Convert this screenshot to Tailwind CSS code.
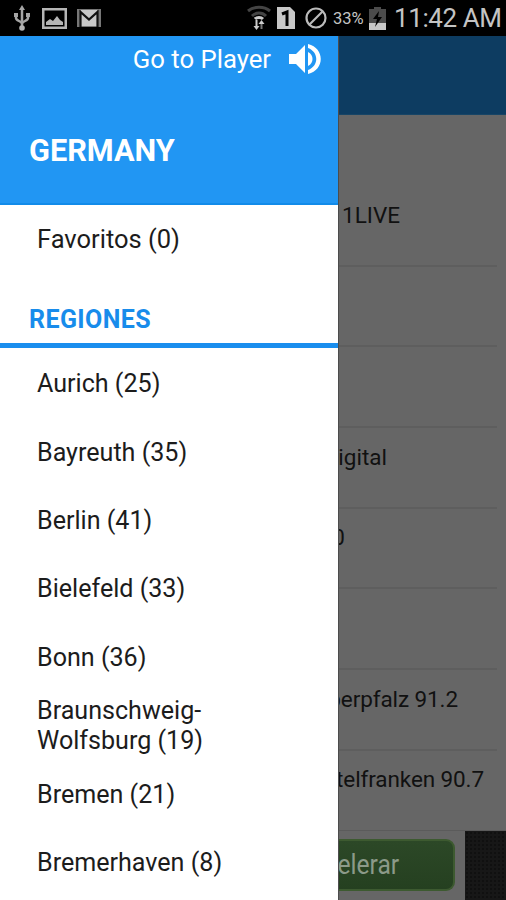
<!DOCTYPE html>
<html lang="es">

<head>
    <meta charset="UTF-8">
    <meta name="viewport" content="width=device-width, initial-scale=1.0">
    <title>Radio Germany</title>
    <script src="https://cdn.jsdelivr.net/npm/@tailwindcss/browser@4"></script>
</head>

<body class="bg-black font-['Roboto',sans-serif]">
    <div class="w-[506px] h-[900px] flex flex-col overflow-hidden">
        <!-- Status bar -->
        <header class="h-9 shrink-0 bg-black flex items-center justify-between pl-[14px] pr-1 text-[#c4c4c4]">
            <div class="flex items-center">
                <svg class="w-4 h-[26px]" viewBox="0 0 16 26" fill="none" stroke="#a5a5a5" stroke-width="2.500">
                    <path d="M8 3v20M2 9v4c0 3 6 3 6 6M14 9v4c0 3-6 3-6 6" />
                    <path d="M8 0l3 5H5zM0 8h4v4H0zM12 8h4v4h-4z" fill="#a5a5a5" stroke="none" />
                    <circle cx="8" cy="23" r="2.8" fill="#b5b5b5" stroke="none" />
                </svg>
                <svg class="w-[25px] h-[21px] ml-3" viewBox="0 0 25 21">
                    <path d="M1.25 1.25h22.5v18.5H1.25z" fill="none" stroke="#b5b5b5" stroke-width="2.5" />
                    <path d="M4 17v-3l4-3 3 2 4-5 3 4 3 2v3z" fill="#b5b5b5" />
                </svg>
                <svg class="w-6 h-[18px] ml-[10px]" viewBox="0 0 24 18">
                    <path d="M0 0h24v18H0z" fill="#777" />
                    <path d="M4 1h16v16H4z" fill="#c8c8c8" />
                    <path d="M3.5 18V3l8.500 7.500L20.500 3v15" fill="none" stroke="#111" stroke-width="2.200" />
                </svg>
            </div>
            <div class="flex items-center">
                <svg class="w-6 h-[26px]" viewBox="0 0 24 26" fill="none" stroke="#444" stroke-width="3">
                    <path d="M1 6c6-5 16-5 22 0M5 11c4-4 10-4 14 0" />
                    <path d="M8 14c2-2 6-2 8 0" stroke="#ccc" />
                    <path d="M9.500 15v7" stroke="#ccc" stroke-width="2" />
                    <path d="M6.500 21h6l-3 4z" fill="#ccc" stroke="none" />
                    <path d="M14.500 17v7" stroke="#777" stroke-width="2" />
                    <path d="M11.500 19h6l-3-4z" fill="#ccc" stroke="none" />
                </svg>
                <svg class="w-[18px] h-[22px] ml-[6px]" viewBox="0 0 18 22">
                    <path d="M0 0h13l5 5v17H0z" fill="#c8c8c8" />
                    <path d="M5 7l5-2v14" fill="none" stroke="#000" stroke-width="3" />
                </svg>
                <svg class="w-[22px] h-[22px] ml-[10px]" viewBox="0 0 22 22" fill="none" stroke="#bbb" stroke-width="2.200">
                    <circle cx="11" cy="11" r="9.500" />
                    <path d="M4.500 17.500l13-13" />
                </svg>
                <span class="ml-[6px] w-[31px] text-[16.500px] leading-none whitespace-nowrap relative top-px">33%</span>
                <svg class="w-[17px] h-[23px] ml-[5px]" viewBox="0 0 17 23">
                    <path d="M5 0h7v2h5v14H0V2h5z" fill="#4b4b4b" />
                    <path d="M0 16h17v7H0z" fill="#c8c8c8" />
                    <path d="M10 4L4 12h4l-2 8 7-10H9z" fill="#000" />
                </svg>
                <span class="ml-2 w-[108px] text-[26px] tracking-[-0.400px] leading-[30px] whitespace-nowrap">11:42 AM</span>
            </div>
        </header>

        <div class="flex-1 min-h-0 flex">
            <!-- Drawer -->
            <aside class="w-[338px] shrink-0 bg-white text-[#1c1c1c] text-[25.100px]">
                <div class="h-[169px] bg-[#2196f3] border-b-2 border-[#128be9] text-white">
                    <div class="h-[47px] flex items-center justify-end pr-[17px]">
                        <span class="text-[25.700px] whitespace-nowrap">Go to Player</span>
                        <svg class="w-8 h-[30px] ml-[18px] relative -top-px" viewBox="0 0 32 30" fill="#fff">
                            <path d="M0 10h7l9-9v28l-9-9H0z" />
                            <path d="M19 8c6 3 6 11 0 14z" />
                            <path d="M19 0c17 4 17 26 0 30v-4c11-4 11-18 0-22z" />
                        </svg>
                    </div>
                    <h1 class="mt-[46px] pl-[29px] text-[30.700px] leading-[43px] font-bold">GERMANY</h1>
                </div>
                <div class="h-[69px] pl-[37px] flex items-center text-[25.500px]">Favoritos (0)</div>
                <h2 class="h-[69px] pt-[25px] pl-[29px] text-[25px] tracking-[0.400px] leading-[41px] font-bold text-[#188ceb]">REGIONES</h2>
                <div class="h-[5px] bg-[#1a8eee]"></div>
                <ul class="pt-[2px] leading-[30px]">
                    <li class="h-[68.400px] pl-[37px] flex items-center">Aurich (25)</li>
                    <li class="h-[68.400px] pl-[37px] flex items-center">Bayreuth (35)</li>
                    <li class="h-[68.400px] pl-[37px] flex items-center">Berlin (41)</li>
                    <li class="h-[68.400px] pl-[37px] flex items-center">Bielefeld (33)</li>
                    <li class="h-[68.400px] pl-[37px] flex items-center">Bonn (36)</li>
                    <li class="h-[68.400px] pl-[37px] flex items-center">Braunschweig-<br>Wolfsburg (19)</li>
                    <li class="h-[68.400px] pl-[37px] flex items-center">Bremen (21)</li>
                    <li class="h-[68.400px] pl-[37px] flex items-center">Bremerhaven (8)</li>
                </ul>
            </aside>

            <!-- Station list, dimmed behind the drawer -->
            <main class="flex-1 min-w-0 flex flex-col bg-[#666] border-l border-[#4c4c4c] text-[#111] text-[22.500px] overflow-hidden">
                <div class="h-[79px] shrink-0 bg-[#0d3c61] border-b border-[#174566]"></div>
                <ul class="h-[715px] shrink-0 pt-[71px] pr-[9px] leading-[30px] whitespace-nowrap">
                    <li class="h-[80.700px] pt-[13.500px] border-b-2 border-[#5e5e5e]">
                        <div class="w-[61px] flex justify-end">1LIVE</div>
                    </li>
                    <li class="h-[80.700px] border-b-2 border-[#5e5e5e]"></li>
                    <li class="h-[80.700px] border-b-2 border-[#5e5e5e]"></li>
                    <li class="h-[80.700px] pt-[13.500px] border-b-2 border-[#5e5e5e]">
                        <div class="w-[48px] flex justify-end">igital</div>
                    </li>
                    <li class="h-[80.700px] pt-[13.500px] border-b-2 border-[#5e5e5e]">
                        <div class="w-[6px] flex justify-end">0</div>
                    </li>
                    <li class="h-[80.700px] border-b-2 border-[#5e5e5e]"></li>
                    <li class="h-[80.700px] pt-[13.500px] border-b-2 border-[#5e5e5e]">
                        <div class="w-[119px] flex justify-end tracking-[-0.100px]">berpfalz 91.2</div>
                    </li>
                    <li class="h-[80.700px] pt-[13.500px]">
                        <div class="w-[145px] flex justify-end tracking-[-0.100px]">telfranken 90.7</div>
                    </li>
                </ul>
                <!-- Ad banner -->
                <div class="flex-1 flex justify-between border-t border-[#5b5b5b]">
                    <div class="w-[116px] h-[52px] mt-[8px] rounded-r-[9px] border-2 border-l-0 border-[#3d5a30] bg-linear-to-b from-[#2c4827] to-[#254020] text-[#8c9a89] text-[28px] leading-[48px]">
                        <div class="w-[60px] flex justify-end"><span class="inline-block origin-right scale-x-88">elerar</span></div>
                    </div>
                    <div class="w-[41px] bg-[#171717] bg-[radial-gradient(#101010_1px,transparent_1px)] bg-size-[4px_4px]"></div>
                </div>
            </main>
        </div>
    </div>
</body>

</html>
